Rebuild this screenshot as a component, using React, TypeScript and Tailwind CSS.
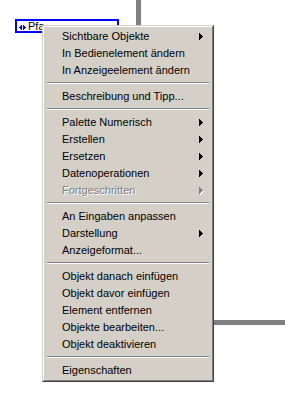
import React from "react";

type Item = { label: string; sub?: boolean; disabled?: boolean } | "sep";

const items: Item[] = [
  { label: "Sichtbare Objekte", sub: true },
  { label: "In Bedienelement ändern" },
  { label: "In Anzeigeelement ändern" },
  "sep",
  { label: "Beschreibung und Tipp..." },
  "sep",
  { label: "Palette Numerisch", sub: true },
  { label: "Erstellen", sub: true },
  { label: "Ersetzen", sub: true },
  { label: "Datenoperationen", sub: true },
  { label: "Fortgeschritten", sub: true, disabled: true },
  "sep",
  { label: "An Eingaben anpassen" },
  { label: "Darstellung", sub: true },
  { label: "Anzeigeformat..." },
  "sep",
  { label: "Objekt danach einfügen" },
  { label: "Objekt davor einfügen" },
  { label: "Element entfernen" },
  { label: "Objekte bearbeiten..." },
  { label: "Objekt deaktivieren" },
  "sep",
  { label: "Eigenschaften" },
];

function Arrow({ disabled }: { disabled?: boolean }) {
  const fill = disabled ? "#808080" : "#000000";
  return (
    <svg width="5" height="8" viewBox="0 0 5 8" shapeRendering="crispEdges" className="block">
      {disabled && (
        <g fill="#ffffff">
          <rect x="1" y="1" width="1" height="7" />
          <rect x="2" y="2" width="1" height="5" />
          <rect x="3" y="3" width="1" height="3" />
          <rect x="4" y="4" width="1" height="1" />
        </g>
      )}
      <g fill={fill}>
        <rect x="0" y="0" width="1" height="7" />
        <rect x="1" y="1" width="1" height="5" />
        <rect x="2" y="2" width="1" height="3" />
        <rect x="3" y="3" width="1" height="1" />
      </g>
    </svg>
  );
}

export default function App() {
  return (
    <div
      className="relative w-[285px] h-[420px] bg-white overflow-hidden"
      style={{ fontFamily: '"Liberation Sans", Arial, sans-serif' }}
    >
      {/* canvas wires */}
      <div className="absolute left-[136px] top-0 w-[5px] h-[30px] bg-[#808080]" />
      <div className="absolute left-[210px] top-[320px] w-[75px] h-[5px] bg-[#808080]" />

      {/* path indicator */}
      <div className="absolute left-[15px] top-[19px] w-[104px] h-[14px] border-2 border-[#0000ff] bg-white flex items-center">
        <svg width="8" height="5" viewBox="0 0 8 5" shapeRendering="crispEdges" className="ml-[2px] mt-[2px]">
          <g fill="#0000ff">
            <rect x="0" y="2" width="1" height="1" />
            <rect x="1" y="1" width="1" height="3" />
            <rect x="2" y="0" width="1" height="5" />
            <rect x="4" y="0" width="1" height="5" />
            <rect x="5" y="1" width="1" height="3" />
            <rect x="6" y="2" width="1" height="1" />
          </g>
        </svg>
        <span className="text-[11px] leading-[10px] text-black ml-[1px]">Pfa</span>
      </div>

      {/* context menu */}
      <div className="absolute left-[42px] top-[25px] w-[172px] border border-t-[#d4d0c8] border-l-[#d4d0c8] border-b-[#404040] border-r-[#404040]">
        <div className="border border-t-white border-l-white border-b-[#808080] border-r-[#808080] bg-[#d4d0c8] p-px">
          {items.map((it, i) =>
            it === "sep" ? (
              <div key={i} className="h-[9px] pt-[3px] mx-[2px]">
                <div className="h-px bg-[#808080]" />
                <div className="h-px bg-white" />
              </div>
            ) : (
              <div
                key={i}
                className="h-[17px] flex items-center justify-between pl-[17px] pr-[7px] text-[11px] leading-[17px]"
              >
                <span
                  className={it.disabled ? "text-[#808080]" : "text-black"}
                  style={it.disabled ? { textShadow: "1px 1px 0 #ffffff" } : undefined}
                >
                  {it.label}
                </span>
                {it.sub && <Arrow disabled={it.disabled} />}
              </div>
            )
          )}
        </div>
      </div>
    </div>
  );
}
